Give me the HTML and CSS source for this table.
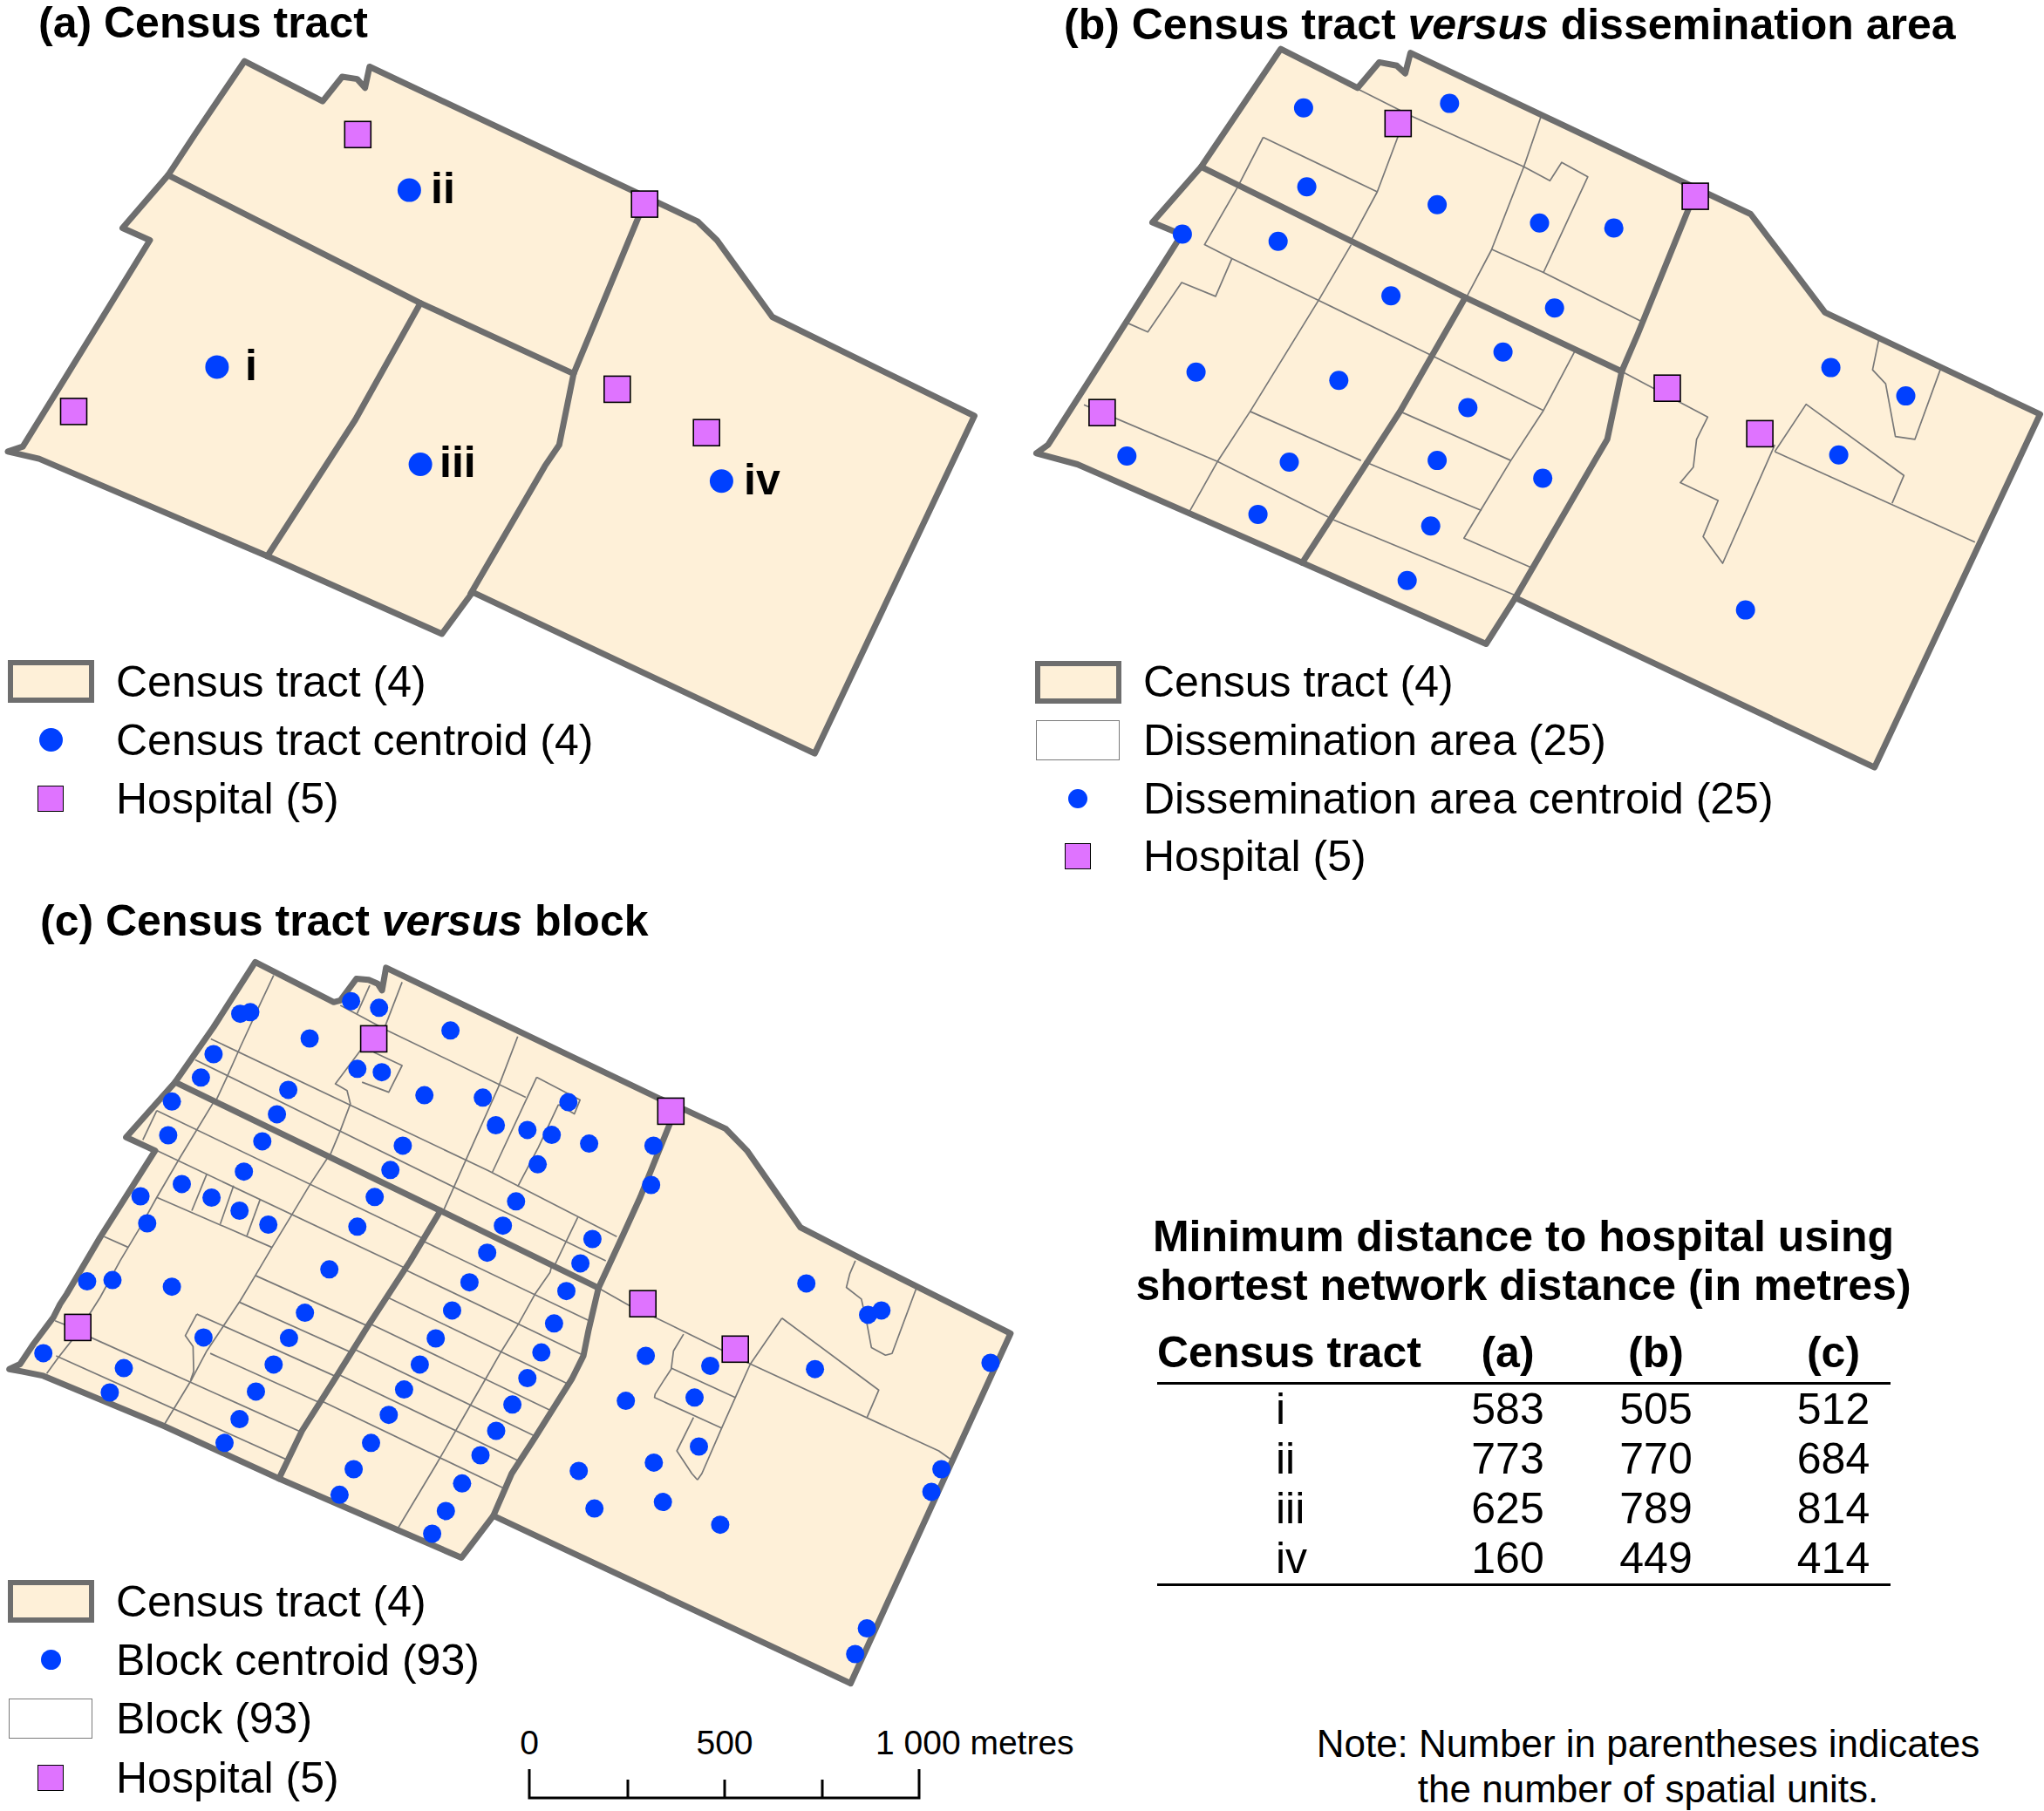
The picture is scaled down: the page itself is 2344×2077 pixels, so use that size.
FILE: index.html
```html
<!DOCTYPE html>
<html lang="en">
<head>
<meta charset="utf-8">
<title>Census tract versus dissemination area and block</title>
<link rel="stylesheet" href="styles.css">
</head>
<body>
<main class="page">
  <section class="panel panel-a">
    <svg class="map" id="map-a" width="1172" height="1000" viewBox="0 0 1172 1000"></svg>
    <h2 class="title">(a) Census tract</h2>
    <ul class="legend">
      <li><span class="key"><span class="sw-tract"></span></span><span class="txt">Census tract (4)</span></li>
      <li><span class="key"><span class="sw-dot big"></span></span><span class="txt">Census tract centroid (4)</span></li>
      <li><span class="key"><span class="sw-hosp"></span></span><span class="txt">Hospital (5)</span></li>
    </ul>
  </section>

  <section class="panel panel-b">
    <svg class="map" id="map-b" width="1172" height="1000" viewBox="1172 0 1172 1000"></svg>
    <h2 class="title">(b) Census tract <em>versus</em> dissemination area</h2>
    <ul class="legend">
      <li><span class="key"><span class="sw-tract"></span></span><span class="txt">Census tract (4)</span></li>
      <li><span class="key"><span class="sw-area"></span></span><span class="txt">Dissemination area (25)</span></li>
      <li><span class="key"><span class="sw-dot"></span></span><span class="txt">Dissemination area centroid (25)</span></li>
      <li><span class="key"><span class="sw-hosp"></span></span><span class="txt">Hospital (5)</span></li>
    </ul>
  </section>

  <section class="panel panel-c">
    <svg class="map" id="map-c" width="1172" height="1077" viewBox="0 1000 1172 1077"></svg>
    <h2 class="title">(c) Census tract <em>versus</em> block</h2>
    <div class="c-bottom">
      <ul class="legend">
        <li><span class="key"><span class="sw-tract"></span></span><span class="txt">Census tract (4)</span></li>
        <li><span class="key"><span class="sw-dot mid"></span></span><span class="txt">Block centroid (93)</span></li>
        <li><span class="key"><span class="sw-area"></span></span><span class="txt">Block (93)</span></li>
        <li><span class="key"><span class="sw-hosp"></span></span><span class="txt">Hospital (5)</span></li>
      </ul>
      <svg class="scale" width="650" height="100" viewBox="590 1973 650 100">
        <text x="607" y="2013" text-anchor="middle">0</text>
        <text x="831" y="2013" text-anchor="middle">500</text>
        <text x="1004" y="2013">1 000 metres</text>
        <path d="M607 2063 H1054 M607 2030 V2064.5 M1054 2030 V2064.5 M720 2042 V2063 M831 2042 V2063 M943 2042 V2063"/>
      </svg>
    </div>
  </section>

  <section class="panel panel-d">
    <h2 class="dist-title">Minimum distance to hospital using<br>shortest network distance (in metres)</h2>
    <div class="dist-table">
      <div class="th first">Census tract</div><div class="th">(a)</div><div class="th">(b)</div><div class="th last">(c)</div>
      <div class="td first">i</div><div class="td">583</div><div class="td">505</div><div class="td last">512</div>
      <div class="td first">ii</div><div class="td">773</div><div class="td">770</div><div class="td last">684</div>
      <div class="td first">iii</div><div class="td">625</div><div class="td">789</div><div class="td last">814</div>
      <div class="td first end">iv</div><div class="td end">160</div><div class="td end">449</div><div class="td last end">414</div>
    </div>
    <p class="note">Note: Number in parentheses indicates<br>the number of spatial units.</p>
  </section>
</main>
<script src="script.js"></script>
</body>
</html>
```

FILE: styles.css
```css
* { box-sizing: border-box; }
html, body { margin: 0; padding: 0; background: #fff; }
body {
  font-family: "Liberation Sans", Arial, sans-serif;
  color: #000;
  width: 2344px;
  height: 2077px;
  overflow: hidden;
}
.page {
  display: grid;
  grid-template-columns: 1172px 1172px;
  grid-template-rows: 1000px 1077px;
  width: 2344px;
  height: 2077px;
}
.panel { position: relative; display: flex; flex-direction: column; }
.map { position: absolute; left: 0; top: 0; overflow: visible; }

.title {
  position: relative;
  margin: 0;
  font-size: 50px;
  font-weight: bold;
  line-height: 50px;
  white-space: nowrap;
}
.title em { font-style: italic; }
.panel-a .title { padding: 1px 0 0 44px; }
.panel-b .title { padding: 3px 0 0 48px; }
.panel-c .title { padding: 31px 0 0 46px; }

.legend {
  position: relative;
  list-style: none;
  margin: 0;
  padding: 0;
  font-size: 50px;
}
.legend li { display: flex; align-items: center; height: 67px; }
.key { flex: none; width: 116px; display: flex; justify-content: center; align-items: center; }
.txt { margin-left: 17px; white-space: nowrap; }

.panel-a .legend { margin-top: 697px; }
.panel-b .legend { margin-top: 696px; padding-left: 6px; }
.panel-b .legend li { height: 66.7px; }
.c-bottom { position: relative; display: flex; align-items: flex-end; margin-top: 722px; }
.panel-c .legend { flex: none; width: 590px; }
.panel-c .legend li { height: 67.3px; }

.sw-tract { width: 99px; height: 49px; border: 6px solid #6e6e6e; background: #fef0d8; }
.sw-area { width: 96px; height: 46px; border: 1.5px solid #7a7a7a; background: #fff; }
.sw-dot { width: 22px; height: 22px; border-radius: 50%; background: #0040ff; }
.sw-dot.big { width: 27px; height: 27px; }
.sw-dot.mid { width: 23px; height: 23px; }
.sw-hosp { width: 30px; height: 30px; background: #df73ff; border: 1.5px solid #000; }

.scale { flex: none; display: block; overflow: visible; }
.scale text { font-family: "Liberation Sans", Arial, sans-serif; font-size: 39px; fill: #000; }
.scale path { fill: none; stroke: #000; stroke-width: 3; }

.tract-fill { fill: #fef0d8; stroke: none; }
.tract-line, .divider { fill: none; stroke: #6e6e6e; stroke-width: 7; stroke-linejoin: round; stroke-linecap: round; }
.thin { fill: none; stroke: #787878; stroke-width: 1.7; stroke-linejoin: round; }
.dot { fill: #0040ff; }
.hosp { fill: #df73ff; stroke: #000; stroke-width: 1.6; }
.lbl { font-family: "Liberation Sans", Arial, sans-serif; font-weight: bold; font-size: 50px; fill: #000; }

.dist-title {
  margin: 390px 0 0;
  width: 1150px;
  text-align: center;
  font-size: 50px;
  font-weight: bold;
  line-height: 56px;
}
.dist-table {
  display: grid;
  grid-template-columns: 340px 124px 216px 161px;
  width: 841px;
  margin: 21px 0 0 155px;
  font-size: 50px;
}
.th {
  font-weight: bold;
  line-height: 56px;
  padding-bottom: 6px;
  border-bottom: 3px solid #000;
  text-align: center;
  white-space: nowrap;
}
.td { line-height: 57px; text-align: center; }
.th.first { text-align: left; }
.td.first { text-align: left; padding-left: 136px; }
.last { padding-left: 30px; }
.td.end { border-bottom: 3px solid #000; }

.note {
  margin: 155px 0 0 268px;
  width: 900px;
  text-align: center;
  font-size: 44px;
  line-height: 52px;
}
```

FILE: script.js
```js
(function () {
  var Z = {
    a: [0, 0, 1172 / 1568, 1000 / 1568],
    b: [1172, 0, 1172 / 1568, 1000 / 1568],
    c: [0, 1000, 1172 / 1568, 1077 / 1568],
    p: [0, 1090, 600 / 1568, 600 / 1568],
    q: [560, 1090, 600 / 1568, 600 / 1568],
    r: [0, 1380, 560 / 1568, 560 / 1568]
  };
  function L(z, a) {
    var t = Z[z], o = [];
    for (var i = 0; i < a.length; i += 2) o.push([t[0] + a[i] * t[2], t[1] + a[i + 1] * t[3]]);
    return o;
  }
  function cat() {
    var o = [];
    for (var i = 0; i < arguments.length; i++) o = o.concat(arguments[i]);
    return o;
  }
  function D(pts, close) {
    return 'M' + pts.map(function (p) { return p[0].toFixed(1) + ' ' + p[1].toFixed(1); }).join(' L') + (close ? ' Z' : '');
  }
  function path(pts, cls, close) { return '<path class="' + cls + '" d="' + D(pts, close) + '"/>'; }
  function dots(pts, r) {
    return pts.map(function (p) {
      return '<circle class="dot" cx="' + p[0].toFixed(1) + '" cy="' + p[1].toFixed(1) + '" r="' + r + '"/>';
    }).join('');
  }
  function hosps(pts) {
    return pts.map(function (p) {
      return '<rect class="hosp" x="' + (p[0] - 15).toFixed(1) + '" y="' + (p[1] - 15).toFixed(1) + '" width="30" height="30"/>';
    }).join('');
  }
  function hit(p, d, a, b) {
    var ex = b[0] - a[0], ey = b[1] - a[1];
    var den = d[0] * ey - d[1] * ex;
    if (Math.abs(den) < 1e-9) return null;
    var wx = a[0] - p[0], wy = a[1] - p[1];
    var t = (wx * ey - wy * ex) / den;
    var s = (wx * d[1] - wy * d[0]) / den;
    if (s < 0 || s > 1) return null;
    return t;
  }
  function clip(p, slope, left, right) {
    var d = [1, slope], tl = -Infinity, tr = Infinity, i, t;
    if (left) {
      for (i = 0; i < left.length - 1; i++) { t = hit(p, d, left[i], left[i + 1]); if (t !== null && t <= 0 && t > tl) tl = t; }
    } else { tl = 0; }
    for (i = 0; i < right.length - 1; i++) { t = hit(p, d, right[i], right[i + 1]); if (t !== null && t >= 0 && t < tr) tr = t; }
    if (!isFinite(tl) || !isFinite(tr)) return null;
    return [[p[0] + tl, p[1] + tl * slope], [p[0] + tr, p[1] + tr * slope]];
  }
  function draw(id, outer, thin, dividers, dotPts, r, hospPts, extra) {
    var h = path(outer, 'tract-fill', true);
    h += thin.map(function (l) { return path(l, 'thin'); }).join('');
    h += dividers.map(function (l) { return path(l, 'divider'); }).join('');
    h += path(outer, 'tract-line', true);
    h += dots(dotPts, r) + hosps(hospPts) + (extra || '');
    document.getElementById(id).innerHTML = h;
  }

  /* ---------- (a) census tract ---------- */
  var outerA = L('a', [375,110, 495,182, 525,138, 548,142, 560,158, 567,120, 1070,398, 1100,432, 1185,570, 1495,748,
    1250,1355, 725,1065, 678,1140, 410,1000, 60,825, 12,812, 35,803, 100,680, 230,432, 188,410, 258,315, 300,240]);
  var divA = [
    L('a', [258,315, 645,545, 880,672]),
    L('a', [645,545, 545,755, 410,1000]),
    L('a', [992,355, 880,672]),
    L('a', [880,672, 858,800, 836,838, 722,1068])
  ];
  var labels = '<text class="lbl" x="494" y="233">ii</text>' +
    '<text class="lbl" x="281" y="436">i</text>' +
    '<text class="lbl" x="504" y="547">iii</text>' +
    '<text class="lbl" x="853" y="567">iv</text>';
  draw('map-a', outerA, [], divA,
    L('a', [628,342, 333,660, 645,835, 1107,865]), 13.5,
    L('a', [549,242, 989,367, 113,740, 947,700, 1084,778]), labels);

  /* ---------- (b) dissemination areas ---------- */
  var outerB = L('b', [397,88, 515,158, 548,112, 575,118, 588,132, 596,95, 1118,385, 1232,562, 1562,745, 1308,1380,
    757,1075, 712,1158, 430,1012, 85,835, 22,815, 40,800, 100,690, 245,422, 200,400, 275,300]);
  var divB = [
    L('b', [275,300, 680,535, 920,668]),
    L('b', [680,535, 580,740, 430,1012]),
    L('b', [1035,340, 945,600, 920,668]),
    L('b', [920,668, 898,790, 878,830, 757,1075])
  ];
  var thinB = [
    [515,160, 600,210, 770,300, 810,325, 828,292, 868,318, 800,490],
    [797,207, 770,300, 720,450, 683,532],
    [720,448, 800,490, 950,578],
    [580,200, 577,245, 545,345, 505,432],
    [370,247, 545,345],
    [370,247, 330,338, 280,440, 322,465],
    [322,465, 297,533, 245,508, 193,597, 160,580],
    [322,465, 455,540, 630,640],
    [505,440, 455,540, 350,740, 300,830, 257,920],
    [350,740, 520,828],
    [95,728, 300,830, 470,930],
    [630,640, 800,738],
    [848,632, 800,738, 750,828, 705,915, 678,968, 780,1020],
    [580,740, 750,828],
    [525,830, 705,918],
    [478,935, 760,1072],
    [920,668, 1052,750, 1035,790, 1030,840, 1010,868, 1068,900, 1045,965, 1075,1013, 1155,800],
    [1155,812, 1203,727, 1353,855, 1335,905],
    [1155,812, 1462,975],
    [1315,608, 1305,665, 1325,690, 1340,785, 1370,790, 1410,661]
  ].map(function (a) { return L('b', a); });
  draw('map-b', outerB, thinB, divB,
    L('b', [432,194, 656,186, 437,336, 637,368, 794,401, 908,410, 246,421, 393,434, 566,532, 817,554, 738,633,
      267,669, 486,684, 684,733, 161,820, 410,831, 637,828, 799,860, 362,925, 627,946, 591,1044, 1241,661,
      1356,712, 1253,818, 1110,1097]), 11,
    L('b', [577,222, 1033,353, 123,742, 990,698, 1132,780]));

  /* ---------- (c) blocks ---------- */
  var outerC = cat(
    L('p', [765,35, 1000,155, 1020,150, 1068,85, 1105,88, 1132,100, 1145,120, 1157,52]),
    L('q', [515,445, 590,478, 712,535, 775,600, 935,830, 1120,925, 1565,1148]),
    L('c', [1305,1355, 757,1075, 708,1145, 428,1013]),
    L('p', [490,1425, 130,1275, 65,1262, 28,1255, 60,1240, 100,1180, 160,1100, 180,1060, 200,1030, 300,860,
      465,600, 378,560, 525,395, 640,230]));
  var L1 = cat(L('p', [525,395, 1320,780]), L('q', [330,1012]));
  var L2 = cat(L('p', [1320,780, 1230,930, 1100,1130, 1000,1290, 905,1440]), L('c', [428,1013]));
  var L3 = L('q', [552,500, 455,740, 405,850, 330,1012]);
  var L4 = cat(L('q', [330,1012, 300,1140, 285,1215, 250,1285, 140,1460, 70,1568]), L('c', [757,1075]));
  var B6 = L('p', [988,612, 930,700, 870,800, 815,890, 765,975, 720,1050, 660,1140, 620,1200, 575,1285, 490,1425]);

  var thinC = [
    L('p', [820,75, 780,160, 720,290, 680,380, 645,455]),
    cat(L('p', [632,265, 1463,660]), L('q', [385,858])),
    cat(L('p', [585,328, 1463,760]), L('q', [352,930])),
    cat(L('p', [1020,165, 1160,240]), L('q', [112,440])),
    L('p', [1108,105, 1070,190]),
    L('p', [1205,95, 1155,225]),
    L('p', [1120,305, 1205,345, 1165,425, 1085,395]),
    L('p', [1080,300, 1005,400, 1040,420, 1050,460, 1020,540, 990,612]),
    cat(L('q', [88,258, 30,410]), L('p', [1400,620, 1330,778])),
    L('q', [145,380, 12,665]),
    L('q', [210,462, 150,590, 88,708]),
    L('q', [145,380, 275,448, 258,490, 210,462]),
    L('q', [268,800, 198,945]),
    L('p', [470,480, 1268,864]),
    L('p', [470,480, 428,568]),
    L('p', [470,600, 1214,952]),
    L('p', [470,740, 815,890]),
    L('p', [620,670, 575,780]),
    L('p', [700,705, 660,820]),
    L('p', [780,745, 740,855]),
    L('p', [312,858, 385,890]),
    L('p', [640,455, 540,620, 470,740, 420,830, 360,930, 300,1040, 230,1150, 175,1220, 140,1268]),
    B6,
    L('r', [632,356, 595,425, 620,460, 622,540, 612,568]),
    L('r', [632,356, 720,395]),
    L('p', [165,1110, 195,1122]),
    cat(L('q', [190,945, 185,965, 140,1030, 90,1120, 40,1200, 0,1270]), [[530,1628], [500,1680], [470,1730], [455,1755]]),
    L('q', [330,1012, 420,1063, 500,1100, 775,1235, 1350,1500, 1385,1525]),
    L('q', [880,1102, 1170,1318, 1135,1400]),
    cat(L('q', [880,1102, 785,1240, 740,1340, 700,1430, 640,1568]), L('c', [1070,1015])),
    L('q', [585,1150, 555,1200, 548,1255, 525,1290, 500,1330, 498,1340, 700,1432]),
    L('q', [548,1252, 740,1340]),
    cat(L('q', [615,1400, 565,1500, 610,1568]), L('c', [1070,1015])),
    L('q', [1100,930, 1083,970, 1073,1010, 1118,1045, 1135,1120, 1148,1190, 1190,1213, 1210,1208, 1283,1012])
  ];
  /* parallel block edges in tract i, starting on the central diagonal or the west edge */
  L('r', [820,232, 770,318, 720,395, 675,482, 290,430, 180,490]).forEach(function (pt) {
    var s = clip(pt, 0.45, null, L2); if (s) thinC.push(s);
  });
  /* parallel block edges in tract iii */
  [[548.6,1453.8], [528.6,1486.9], [509.2,1519], [490.6,1550], [472.5,1579.3], [454.7,1608.2], [435.7,1638.8],
    [415.7,1670], [397.6,1699.8]].forEach(function (pt) {
    var s = clip(pt, 0.48, L2, L4); if (s) thinC.push(s);
  });

  var dotsC = cat(
    L('p', [720,190, 750,185, 1052,152, 1136,172, 928,264, 1350,240, 640,311, 602,381, 1071,355, 1144,365, 864,418,
      1272,434, 1447,441, 515,453, 830,491, 1486,524, 504,554, 786,572, 1207,585, 731,663, 1170,658, 545,700, 421,737,
      634,741, 718,780, 1123,739, 441,818, 804,822, 1071,828, 1507,825, 1460,906, 987,956, 1407,995, 261,992, 337,988,
      515,1008, 914,1086, 1355,1079, 610,1160, 866,1162, 1306,1163, 130,1207, 820,1241, 1258,1241, 371,1252, 767,1322,
      1211,1316, 329,1325, 1165,1392, 718,1405, 1487,1440, 1112,1476, 673,1476, 1440,1513, 1060,1555]),
    L('q', [240,455, 117,538, 190,553, 302,579, 495,585, 148,641, 488,703, 83,752, 312,865, 276,938, 234,1021,
      197,1118, 159,1205, 117,1282, 72,1361, 953,998, 1138,1092, 1178,1079, 472,1215, 665,1245, 979,1255, 1505,1236,
      412,1350, 618,1340, 631,1487, 496,1535, 271,1560, 1358,1555]),
    L('c', [521,1040, 709,1021, 684,1067, 663,1105, 912,1063, 1017,1052, 1105,1090, 1330,1263, 1312,1306, 1429,1035]));

  draw('map-c', outerC, thinC, [L1, L2, L3, L4], dotsC, 10.5,
    cat(L('p', [1120,265, 233,1130]), L('q', [547,482, 463,1059, 740,1195])));
})();
```
